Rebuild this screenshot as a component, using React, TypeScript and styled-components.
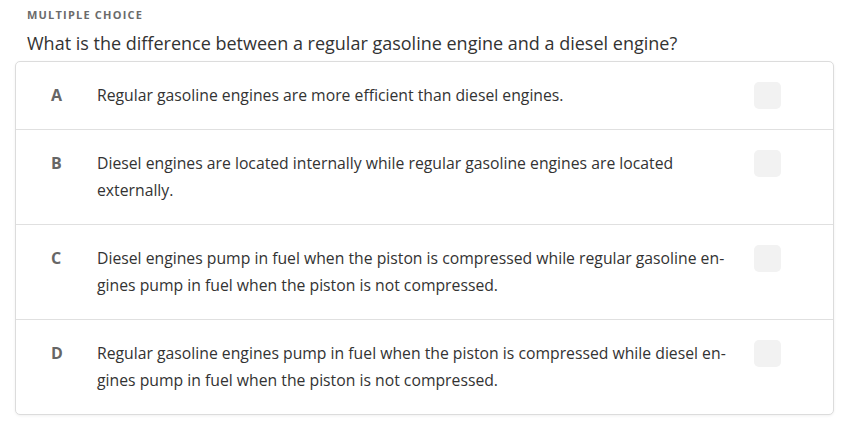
import React from 'react';
import styled, { createGlobalStyle } from 'styled-components';

const GlobalStyle = createGlobalStyle`
  html, body {
    margin: 0;
    padding: 0;
    background: #ffffff;
  }
  body {
    font-family: "Open Sans", "Liberation Sans", sans-serif;
    color: #333;
  }
`;

const options = [
  { key: 'A', text: 'Regular gasoline engines are more efficient than diesel engines.' },
  { key: 'B', text: 'Diesel engines are located internally while regular gasoline engines are located externally.' },
  {
    key: 'C',
    text: 'Diesel engines pump in fuel when the piston is compressed while regular gasoline en\u00ADgines pump in fuel when the piston is not compressed.',
  },
  {
    key: 'D',
    text: 'Regular gasoline engines pump in fuel when the piston is compressed while diesel en\u00ADgines pump in fuel when the piston is not compressed.',
  },
];

const App: React.FC = () => {
  return (
    <>
      <GlobalStyle />
      <Page>
        <Kicker>MULTIPLE CHOICE</Kicker>
        <Question>What is the difference between a regular gasoline engine and a diesel engine?</Question>
        <Card>
          {options.map(opt => (
            <OptionRow key={opt.key}>
              <Letter>{opt.key}</Letter>
              <OptionText lang="en">{opt.text}</OptionText>
              <CheckBox />
            </OptionRow>
          ))}
        </Card>
      </Page>
    </>
  );
};

const Page = styled.div`
  padding: 7px 12px 16px 15px;
`;

const Kicker = styled.div`
  padding-left: 12px;
  font-size: 11px;
  font-weight: 700;
  letter-spacing: 1.2px;
  color: #6b6b6b;
  line-height: 15px;
`;

const Question = styled.h2`
  margin: 9px 0 5px;
  padding-left: 12px;
  font-size: 18px;
  font-weight: 400;
  line-height: 25px;
  color: #333;
`;

const Card = styled.div`
  border: 1px solid #dcdcdc;
  border-radius: 5px;
  box-shadow: 0 1px 3px rgba(0, 0, 0, 0.06);
  background: #fff;
`;

const OptionRow = styled.div`
  display: flex;
  align-items: flex-start;
  padding: 20px 52px 20px 35px;
  border-bottom: 1px solid #e0e0e0;

  &:last-child {
    border-bottom: none;
  }
`;

const Letter = styled.div`
  width: 46px;
  flex-shrink: 0;
  font-size: 16px;
  font-weight: 700;
  line-height: 27px;
  color: #666;
`;

const OptionText = styled.div`
  flex: 1;
  font-size: 15.75px;
  line-height: 27px;
  color: #333;
  hyphens: manual;
  padding-right: 14px;
`;

const CheckBox = styled.div`
  width: 27px;
  height: 27px;
  flex-shrink: 0;
  border-radius: 5px;
  background: #f2f2f2;
`;

export default App;
